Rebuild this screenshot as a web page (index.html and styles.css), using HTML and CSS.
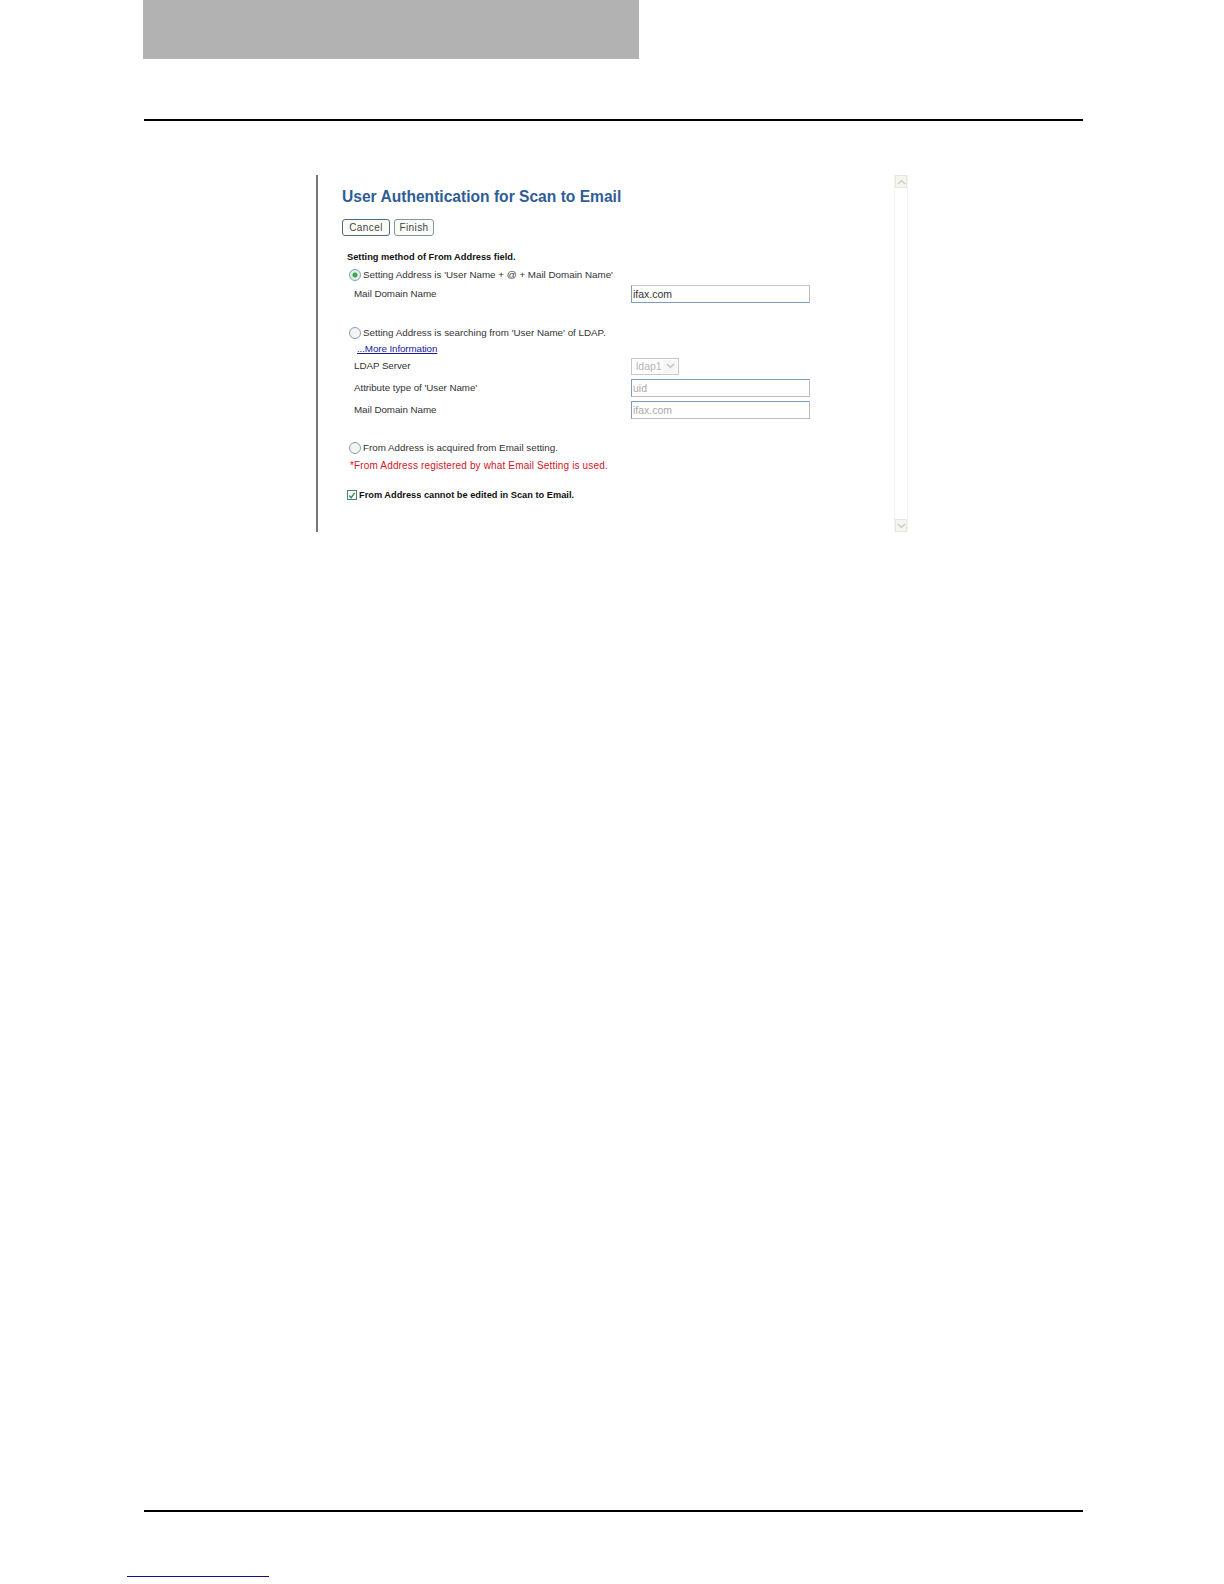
FILE: index.html
```html
<!DOCTYPE html>
<html lang="en">
<head>
  <meta charset="UTF-8">
  <title>User Authentication for Scan to Email</title>
  <link rel="stylesheet" href="styles.css">
</head>
<body>
  <div class="banner"></div>
  <div class="rule top-rule"></div>

  <div class="shot">
    <div class="form">
      <h1>User Authentication for Scan to Email</h1>
      <div class="buttons">
        <button class="btn btn-cancel">Cancel</button>
        <button class="btn btn-finish">Finish</button>
      </div>

      <div class="heading">Setting method of From Address field.</div>

      <div class="choice choice-first">
        <span class="radio checked"></span>
        <span>Setting Address is 'User Name + @ + Mail Domain Name'</span>
      </div>
      <div class="field field-domain">
        <span class="label">Mail Domain Name</span>
        <div class="input">ifax.com</div>
      </div>

      <div class="choice choice-ldap">
        <span class="radio"></span>
        <span>Setting Address is searching from 'User Name' of LDAP.</span>
      </div>
      <a class="more" href="#">...More Information</a>
      <div class="field field-server">
        <span class="label">LDAP Server</span>
        <div class="select">ldap1<span class="arrow"><svg width="9" height="6" viewBox="0 0 9 6"><path d="M1 1l3.5 3.5L8 1" fill="none" stroke="#c4c4c4" stroke-width="1.5"/></svg></span></div>
      </div>
      <div class="field field-attr">
        <span class="label">Attribute type of 'User Name'</span>
        <div class="input disabled">uid</div>
      </div>
      <div class="field field-attr">
        <span class="label">Mail Domain Name</span>
        <div class="input disabled">ifax.com</div>
      </div>

      <div class="choice choice-email">
        <span class="radio"></span>
        <span>From Address is acquired from Email setting.</span>
      </div>
      <div class="note">*From Address registered by what Email Setting is used.</div>

      <div class="lock">
        <span class="check"><svg width="9" height="9" viewBox="0 0 9 9"><path d="M1.5 4.5l2 2.5 4-5.5" fill="none" stroke="#2f9e3f" stroke-width="1.6"/></svg></span>
        <span>From Address cannot be edited in Scan to Email.</span>
      </div>
    </div>

    <div class="scrollbar">
      <div class="scroll-btn"><svg width="9" height="6" viewBox="0 0 9 6"><path d="M1 5l3.5-3.5L8 5" fill="none" stroke="#c9cfc4" stroke-width="1.5"/></svg></div>
      <div class="scroll-btn"><svg width="9" height="6" viewBox="0 0 9 6"><path d="M1 1l3.5 3.5L8 1" fill="none" stroke="#c9cfc4" stroke-width="1.5"/></svg></div>
    </div>
  </div>

  <div class="rule bottom-rule"></div>
  <div class="foot-link"></div>
</body>
</html>
```

FILE: styles.css
```css
html, body {
  margin: 0;
  padding: 0;
}
body {
  height: 1584px;
  overflow: hidden;
  background-color: #fff;
  font-family: "Liberation Sans", Arial, sans-serif;
  font-size: 9.8px;
  color: #333;
}
.banner {
  width: 496px;
  height: 59px;
  margin-left: 143px;
  background-color: #b2b2b2;
}
.rule {
  width: 939px;
  height: 2px;
  margin-left: 144px;
  background-color: #000;
}
.top-rule {
  margin-top: 60px;
}
.bottom-rule {
  margin-top: 978px;
}
.foot-link {
  width: 142px;
  height: 1px;
  margin: 64px 0 0 127px;
  background-color: #10107f;
}

/* pasted screen capture */
.shot {
  display: flex;
  width: 590px;
  height: 357px;
  margin: 54px 0 0 316px;
  border-left: 2px solid #777;
}
.form {
  flex: 1;
  padding: 12px 0 0 24px;
}
h1 {
  margin: 0;
  font-size: 15.6px;
  line-height: 19px;
  color: #2f5d96;
}
.buttons {
  display: flex;
  gap: 4px;
  margin-top: 13px;
}
.btn {
  height: 17px;
  padding: 0;
  border: 1px solid #4d6a80;
  border-radius: 3px;
  background-color: #fbfbf8;
  font-family: inherit;
  font-size: 10px;
  letter-spacing: 0.4px;
  color: #444;
}
.btn-cancel {
  width: 48px;
}
.btn-finish {
  width: 40px;
  border-color: #7d96a8;
}
.heading {
  margin: 15px 0 0 5px;
  font-size: 9.3px;
  line-height: 12px;
  font-weight: bold;
  color: #111;
}
.choice {
  display: flex;
  align-items: center;
  gap: 2px;
  height: 12px;
  margin-left: 7px;
  line-height: 12px;
}
.choice-first {
  margin-top: 6px;
}
.choice-ldap {
  margin-top: 24px;
}
.choice-email {
  margin-top: 23px;
}
.radio {
  box-sizing: border-box;
  width: 12px;
  height: 12px;
  border: 1px solid #7f9db9;
  border-radius: 50%;
  background-color: #f4f4f0;
}
.checked {
  background: radial-gradient(circle, #3aa655 0 2px, #e4f0e4 3px);
}
.field {
  display: flex;
  align-items: center;
  margin-left: 12px;
}
.field-domain {
  height: 18px;
  margin-top: 4px;
}
.field-server {
  height: 18px;
  margin-top: 2px;
}
.field-attr {
  height: 18px;
  margin-top: 4px;
}
.label {
  width: 277px;
  padding-bottom: 2px;
  letter-spacing: -0.05px;
}
.input {
  box-sizing: border-box;
  width: 179px;
  height: 18px;
  padding-left: 1px;
  border: 1px solid #bdbdbd;
  border-top-color: #c4c4c4;
  border-bottom-color: #7f9db9;
  border-left-color: #7f9db9;
  font-size: 10.5px;
  line-height: 16px;
  color: #333;
}
.disabled {
  border-top-color: #7f9db9;
  border-bottom-color: #bdbdbd;
  color: #aaa;
}
.select {
  box-sizing: border-box;
  display: flex;
  align-items: center;
  justify-content: space-between;
  width: 48px;
  height: 17px;
  padding: 0 1px 0 4px;
  border: 1px solid #c8c8c8;
  font-size: 10.5px;
  color: #b5b5b5;
}
.arrow {
  display: flex;
  align-items: center;
  justify-content: center;
  width: 14px;
  height: 13px;
  background-color: #f6f6f3;
}
.more {
  display: block;
  width: max-content;
  margin: 4px 0 0 15px;
  line-height: 12px;
  letter-spacing: -0.1px;
  color: #1a1a9c;
}
.note {
  margin: 6px 0 0 8px;
  font-size: 10px;
  line-height: 12px;
  letter-spacing: 0.15px;
  color: #d5141e;
}
.lock {
  display: flex;
  align-items: center;
  gap: 2px;
  height: 12px;
  margin: 17px 0 0 5px;
  font-size: 9.25px;
  font-weight: bold;
  color: #111;
}
.check {
  box-sizing: border-box;
  display: flex;
  align-items: center;
  justify-content: center;
  width: 10px;
  height: 10px;
  border: 1px solid #4d7a94;
}
.scrollbar {
  box-sizing: border-box;
  display: flex;
  flex-direction: column;
  justify-content: space-between;
  width: 14px;
  height: 357px;
  border-left: 1px solid #f3f3f0;
  border-right: 1px solid #f3f3f0;
}
.scroll-btn {
  box-sizing: border-box;
  display: flex;
  align-items: center;
  justify-content: center;
  height: 13px;
  border: 1px solid #e6e8e0;
  background-color: #f4f6f0;
}
```
